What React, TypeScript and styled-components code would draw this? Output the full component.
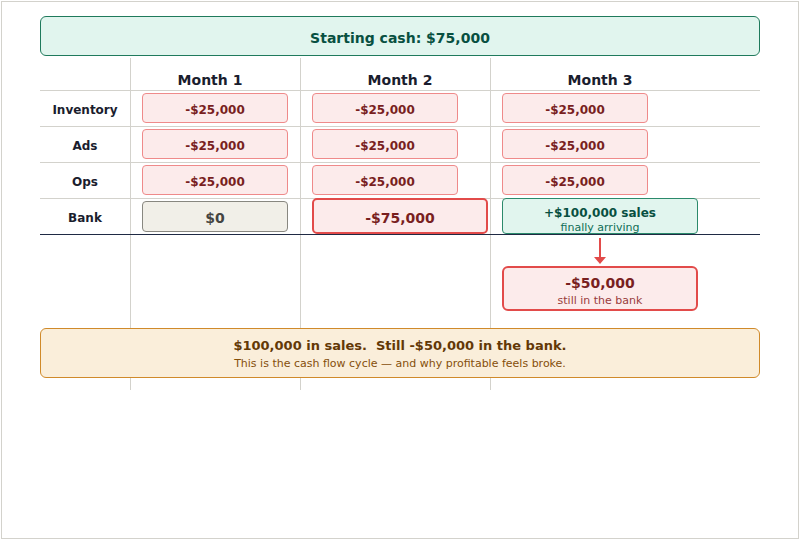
import React from 'react';
import styled, { createGlobalStyle, css } from 'styled-components';

const Global = createGlobalStyle`
  html, body { margin: 0; padding: 0; background: #fff; }
  body { font-family: "DejaVu Sans", "Noto Sans", sans-serif; }
`;

const GRID = '90px 170px 190px 270px';
const LINE = '#d3d2cc';

const Frame = styled.div`
  box-sizing: border-box;
  margin: 1px;
  width: 798px;
  height: 538px;
  border: 1px solid ${LINE};
  background: #fff;
  padding: 14px 0 0 38px;
  display: flex;
  flex-direction: column;
`;

const StartBanner = styled.div`
  box-sizing: border-box;
  width: 720px;
  height: 40px;
  border: 1px solid #1f7a5c;
  border-radius: 6px;
  background: #e1f5ee;
  display: flex;
  align-items: center;
  justify-content: center;
  padding-top: 3px;
  font-weight: bold;
  font-size: 14px;
  color: #085041;
`;

const Table = styled.div`
  margin-top: 2px;
  width: 720px;
  display: flex;
  flex-direction: column;
  padding-bottom: 12px;
  background:
    linear-gradient(${LINE}, ${LINE}) 90px 0 / 1px 100% no-repeat,
    linear-gradient(${LINE}, ${LINE}) 260px 0 / 1px 100% no-repeat,
    linear-gradient(${LINE}, ${LINE}) 450px 0 / 1px 100% no-repeat;
`;

const HeaderRow = styled.div`
  box-sizing: border-box;
  display: grid;
  grid-template-columns: ${GRID};
  height: 33px;
  border-bottom: 1px solid ${LINE};
`;

const HeadCell = styled.div<{ $shift: number }>`
  font-weight: bold;
  font-size: 14px;
  line-height: 16px;
  color: #1a1d2e;
  text-align: center;
  padding-top: 14px;
  padding-left: ${(p) => Math.max(0, p.$shift * 2)}px;
  padding-right: ${(p) => Math.max(0, -p.$shift * 2)}px;
`;

const Row = styled.div<{ $dark?: boolean }>`
  box-sizing: border-box;
  display: grid;
  grid-template-columns: ${GRID};
  height: 36px;
  border-bottom: 1px solid ${(p) => (p.$dark ? '#1f2a44' : LINE)};
`;

const Label = styled.div`
  display: flex;
  align-items: center;
  justify-content: center;
  padding-top: 3px;
  font-weight: bold;
  font-size: 12px;
  color: #1a1d2e;
`;

const Cell = styled.div`
  display: flex;
  align-items: flex-start;
  padding-left: 12px;
`;

type Variant = 'neg' | 'neutral' | 'alert' | 'pos';

const variants: Record<Variant, ReturnType<typeof css>> = {
  neg: css`
    width: 146px;
    height: 30px;
    margin-top: 2px;
    padding-top: 3px;
    border: 1px solid #ef8a8a;
    border-radius: 4px;
    background: #fcebeb;
    color: #791f1f;
    font-size: 12px;
  `,
  neutral: css`
    width: 146px;
    height: 31px;
    margin-top: 2px;
    padding-top: 3px;
    border: 1.5px solid #888780;
    border-radius: 4px;
    background: #f1efe8;
    color: #444441;
    font-size: 14px;
  `,
  alert: css`
    width: 176px;
    height: 36px;
    margin-top: -1px;
    padding-top: 3px;
    border: 2px solid #e24b4a;
    border-radius: 5px;
    background: #fcebeb;
    color: #791f1f;
    font-size: 14px;
  `,
  pos: css`
    width: 196px;
    height: 36px;
    margin-top: -1px;
    padding-top: 7px;
    justify-content: flex-start;
    border: 1px solid #2b8a6b;
    border-radius: 4px;
    background: #e1f5ee;
    color: #085041;
    font-size: 12px;
  `,
};

const Box = styled.div<{ $variant: Variant }>`
  box-sizing: border-box;
  display: flex;
  flex-direction: column;
  align-items: center;
  justify-content: center;
  font-weight: bold;
  ${(p) => variants[p.$variant]}
`;

const BoxNote = styled.div<{ $tone: 'green' | 'red' }>`
  font-weight: normal;
  font-size: 11px;
  line-height: 14px;
  color: ${(p) => (p.$tone === 'green' ? '#0f6e56' : '#993c3c')};
`;

const BoxTitle = styled.div`
  line-height: 15px;
`;

const Below = styled.div`
  display: grid;
  grid-template-columns: ${GRID};
`;

const Flow = styled.div`
  grid-column: 4;
  padding-left: 12px;
  padding-top: 3px;
  width: 196px;
  display: flex;
  flex-direction: column;
  align-items: center;
`;

const ResultBox = styled.div`
  box-sizing: border-box;
  margin-top: 2px;
  width: 196px;
  height: 45px;
  border: 2px solid #e24b4a;
  border-radius: 6px;
  background: #fcebeb;
  display: flex;
  flex-direction: column;
  align-items: center;
  padding-top: 7px;
`;

const ResultValue = styled.div`
  font-weight: bold;
  font-size: 14px;
  line-height: 17px;
  color: #791f1f;
`;

const ResultNote = styled(BoxNote)`
  margin-top: 2px;
`;

const Summary = styled.div`
  box-sizing: border-box;
  margin-top: 17px;
  height: 50px;
  border: 1px solid #d08a2a;
  border-radius: 6px;
  background: #faeeda;
  display: flex;
  flex-direction: column;
  align-items: center;
  padding-top: 9px;
`;

const SummaryTitle = styled.div`
  font-weight: bold;
  font-size: 13px;
  line-height: 16px;
  color: #633806;
  white-space: pre;
`;

const SummaryNote = styled.div`
  margin-top: 3px;
  font-size: 11px;
  line-height: 14px;
  color: #854f0b;
`;

const Arrow = () => (
  <svg width="12" height="26" viewBox="0 0 12 26" style={{ display: 'block' }}>
    <line x1="6" y1="0" x2="6" y2="19" stroke="#e24b4a" strokeWidth="2" />
    <polygon points="0,19 12,19 6,26" fill="#e24b4a" />
  </svg>
);

const expenses = ['Inventory', 'Ads', 'Ops'];

export default function App() {
  return (
    <>
      <Global />
      <Frame>
        <StartBanner>Starting cash: $75,000</StartBanner>
        <Table>
          <HeaderRow>
            <div />
            <HeadCell $shift={-5}>Month 1</HeadCell>
            <HeadCell $shift={5}>Month 2</HeadCell>
            <HeadCell $shift={-25}>Month 3</HeadCell>
          </HeaderRow>
          {expenses.map((name) => (
            <Row key={name}>
              <Label>{name}</Label>
              {[0, 1, 2].map((i) => (
                <Cell key={i}>
                  <Box $variant="neg">-$25,000</Box>
                </Cell>
              ))}
            </Row>
          ))}
          <Row $dark>
            <Label>Bank</Label>
            <Cell>
              <Box $variant="neutral">$0</Box>
            </Cell>
            <Cell>
              <Box $variant="alert">-$75,000</Box>
            </Cell>
            <Cell>
              <Box $variant="pos">
                <BoxTitle>+$100,000 sales</BoxTitle>
                <BoxNote $tone="green">finally arriving</BoxNote>
              </Box>
            </Cell>
          </Row>
          <Below>
            <Flow>
              <Arrow />
              <ResultBox>
                <ResultValue>-$50,000</ResultValue>
                <ResultNote $tone="red">still in the bank</ResultNote>
              </ResultBox>
            </Flow>
          </Below>
          <Summary>
            <SummaryTitle>{'$100,000 in sales.  Still -$50,000 in the bank.'}</SummaryTitle>
            <SummaryNote>This is the cash flow cycle — and why profitable feels broke.</SummaryNote>
          </Summary>
        </Table>
      </Frame>
    </>
  );
}
